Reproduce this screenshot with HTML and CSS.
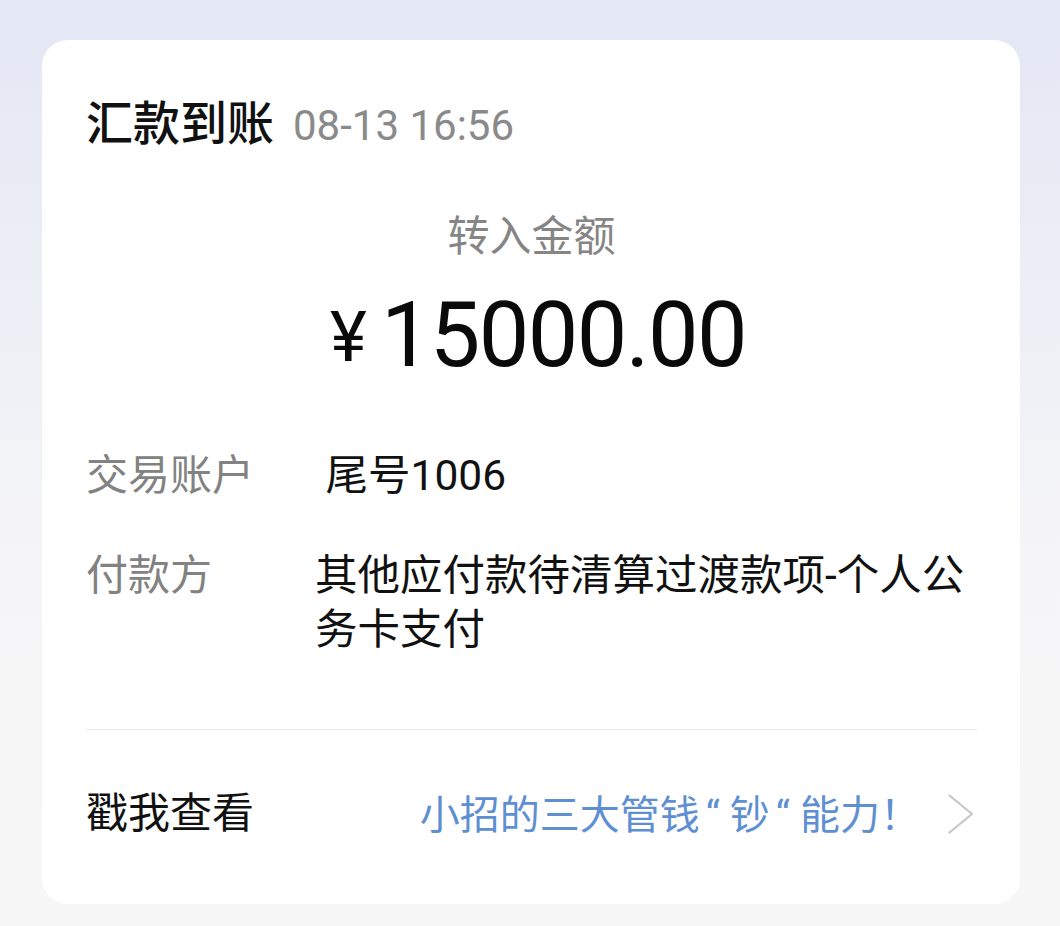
FILE: index.html
```html
<!DOCTYPE html>
<html lang="zh-CN">
<head>
<meta charset="utf-8">
<title>汇款到账</title>
<link rel="stylesheet" href="styles.css">
</head>
<body>
<div class="page">
  <section class="card">
    <header class="head">
      <h1 class="title">汇款到账</h1>
      <span class="time">08-13 16:56</span>
    </header>
    <div class="amount-label">转入金额</div>
    <div class="amount"><span class="yen">¥</span><span class="num">15000.00</span></div>
    <div class="rows">
      <div class="row">
        <div class="label">交易账户</div>
        <div class="value pre"> 尾号1006</div>
      </div>
      <div class="row row-2">
        <div class="label">付款方</div>
        <div class="value">其他应付款待清算过渡款项-个人公务卡支付</div>
      </div>
    </div>
    <div class="divider"></div>
    <div class="footer">
      <span class="foot-label">戳我查看</span>
      <span class="link">小招的三大管钱<span class="q">“</span>钞<span class="q">“</span>能力！</span>
      <svg class="chev" width="26" height="40" viewBox="0 0 26 40"><polyline points="1.5,1.5 24,20 1.5,38.5" fill="none" stroke="#c6c6c6" stroke-width="2.2" stroke-linecap="round" stroke-linejoin="round"/></svg>
    </div>
  </section>
</div>
</body>
</html>
```
FILE: styles.css
```css
html, body {
  margin: 0;
  padding: 0;
}
body {
  min-height: 926px;
  background: linear-gradient(180deg, #e3e7f4 0px, #eceef6 260px, #f5f5f7 560px, #f7f7f7 926px);
  font-family: Roboto, "Noto Sans CJK SC", sans-serif;
}
.page {
  padding: 40px 40px 22px 42px;
}
.card {
  box-sizing: border-box;
  height: 864px;
  background: #ffffff;
  border-radius: 26px;
  padding: 52px 43px 0 44px;
}
.head {
  display: flex;
  align-items: baseline;
  height: 56px;
  line-height: 56px;
}
.title {
  margin: 0;
  font-size: 47px;
  font-weight: 500;
  color: #111111;
  font-family: "Noto Sans CJK SC", sans-serif;
}
.time {
  margin-left: 19px;
  font-size: 42px;
  color: #8a8a8a;
}
.amount-label {
  margin-top: 57px;
  text-align: center;
  font-size: 42px;
  line-height: 56px;
  color: #858585;
  font-family: "Noto Sans CJK SC", sans-serif;
}
.amount {
  margin-top: 25px;
  text-align: center;
  line-height: 100px;
  height: 100px;
  color: #0a0a0a;
  padding-left: 13px;
}
.yen {
  font-size: 70px;
  margin-right: 14px;
  vertical-align: 5px;
}
.num {
  font-size: 90px;
  letter-spacing: -1.6px;
}
.rows {
  margin-top: 63px;
  display: flex;
  flex-direction: column;
  gap: 46px;
}
.row {
  display: flex;
  line-height: 54px;
}
.label {
  width: 229px;
  flex: none;
  font-size: 42px;
  color: #828282;
}
.value {
  flex: 1;
  font-size: 42.5px;
  color: #111111;
}
.pre {
  white-space: pre;
}
.divider {
  margin-top: 72px;
  height: 1px;
  background: #e9e9e9;
}
.footer {
  margin-top: 57px;
  display: flex;
  align-items: center;
  line-height: 54px;
  height: 54px;
}
.foot-label {
  font-size: 42px;
  color: #111111;
}
.link {
  margin-left: auto;
  font-size: 40px;
  color: #5f8fd3;
  font-family: "Noto Sans CJK SC", sans-serif;
}
.q {
  font-family: Roboto, sans-serif;
  margin: 0 10px 0 6px;
}
.chev {
  margin-left: 28px;
  margin-right: 3px;
  flex: none;
}
```
